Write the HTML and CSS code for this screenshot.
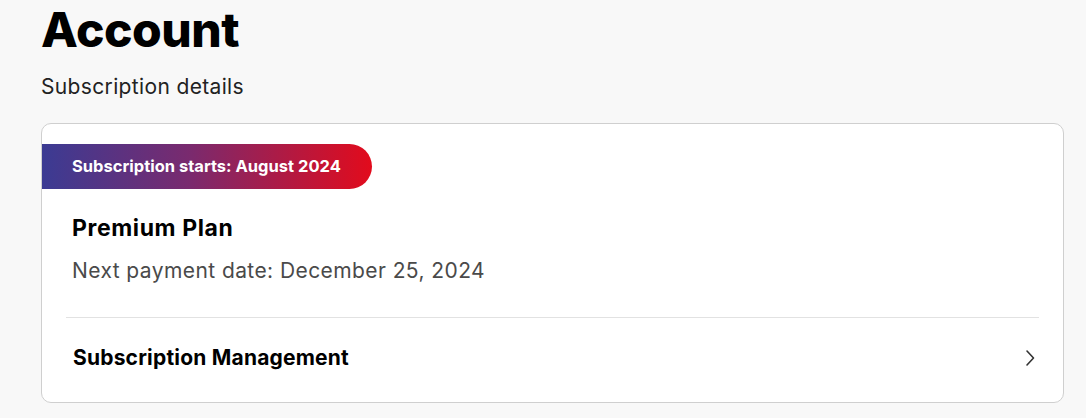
FILE: index.html
```html
<!DOCTYPE html>
<html lang="en">
<head>
    <meta charset="UTF-8">
    <meta name="viewport" content="width=device-width, initial-scale=1.0">
    <title>Account</title>
    <link rel="stylesheet" href="styles.css">
</head>
<body>
    <main class="page">
        <h1 class="page-title">Account</h1>
        <h2 class="section-title">Subscription details</h2>

        <div class="card">
            <div class="badge">Subscription starts: August 2024</div>
            <div class="plan">
                <div class="plan-name">Premium Plan</div>
                <div class="plan-next">Next payment date: December 25, 2024</div>
            </div>
            <a class="manage" href="#">
                <span>Subscription Management</span>
                <svg width="12" height="18" viewBox="0 0 12 18" fill="none">
                    <path d="M3 2 L9.5 9 L3 16" stroke="#333" stroke-width="1.6" stroke-linecap="round" stroke-linejoin="round"/>
                </svg>
            </a>
        </div>
    </main>
</body>
</html>
```

FILE: styles.css
```css
body {
    margin: 0;
    padding: 0;
    background-color: #f8f8f8;
    color: #000;
    font-family: Inter, "Noto Sans", Arial, sans-serif;
}

.page {
    padding: 0 22px 0 41px;
}

.page-title {
    font-size: 48px;
    font-weight: 800;
    line-height: 60px;
    margin: 0;
    letter-spacing: -0.5px;
}

.section-title {
    font-size: 21px;
    font-weight: 400;
    color: #222;
    margin: 12px 0 21px;
    line-height: 30px;
    letter-spacing: 0.35px;
}

.card {
    background-color: #fff;
    border: 1px solid #cfcfcf;
    border-radius: 10px;
    padding: 20px 0 0;
}

.badge {
    display: inline-block;
    height: 45px;
    line-height: 45px;
    padding: 0 31px 0 30px;
    border-radius: 0 23px 23px 0;
    background: linear-gradient(90deg, #3b3b93 0%, #7a2a6e 45%, #e20b1c 100%);
    color: #fff;
    font-size: 16.5px;
    font-weight: 700;
    letter-spacing: 0;
}

.plan {
    padding: 24px 31px 31px 6px;
    margin: 0 24px;
    border-bottom: 1px solid #e2e2e2;
}

.plan-name {
    font-size: 23px;
    font-weight: 700;
    line-height: 30px;
    letter-spacing: 0.6px;
}

.plan-next {
    margin-top: 13px;
    font-size: 21px;
    color: #4a4a4a;
    line-height: 30px;
    letter-spacing: 0.42px;
}

.manage {
    display: flex;
    justify-content: space-between;
    align-items: center;
    padding: 25px 27px 29px 31px;
    color: #000;
    text-decoration: none;
    font-size: 21px;
    font-weight: 700;
    line-height: 30px;
    letter-spacing: 0.2px;
}
```
